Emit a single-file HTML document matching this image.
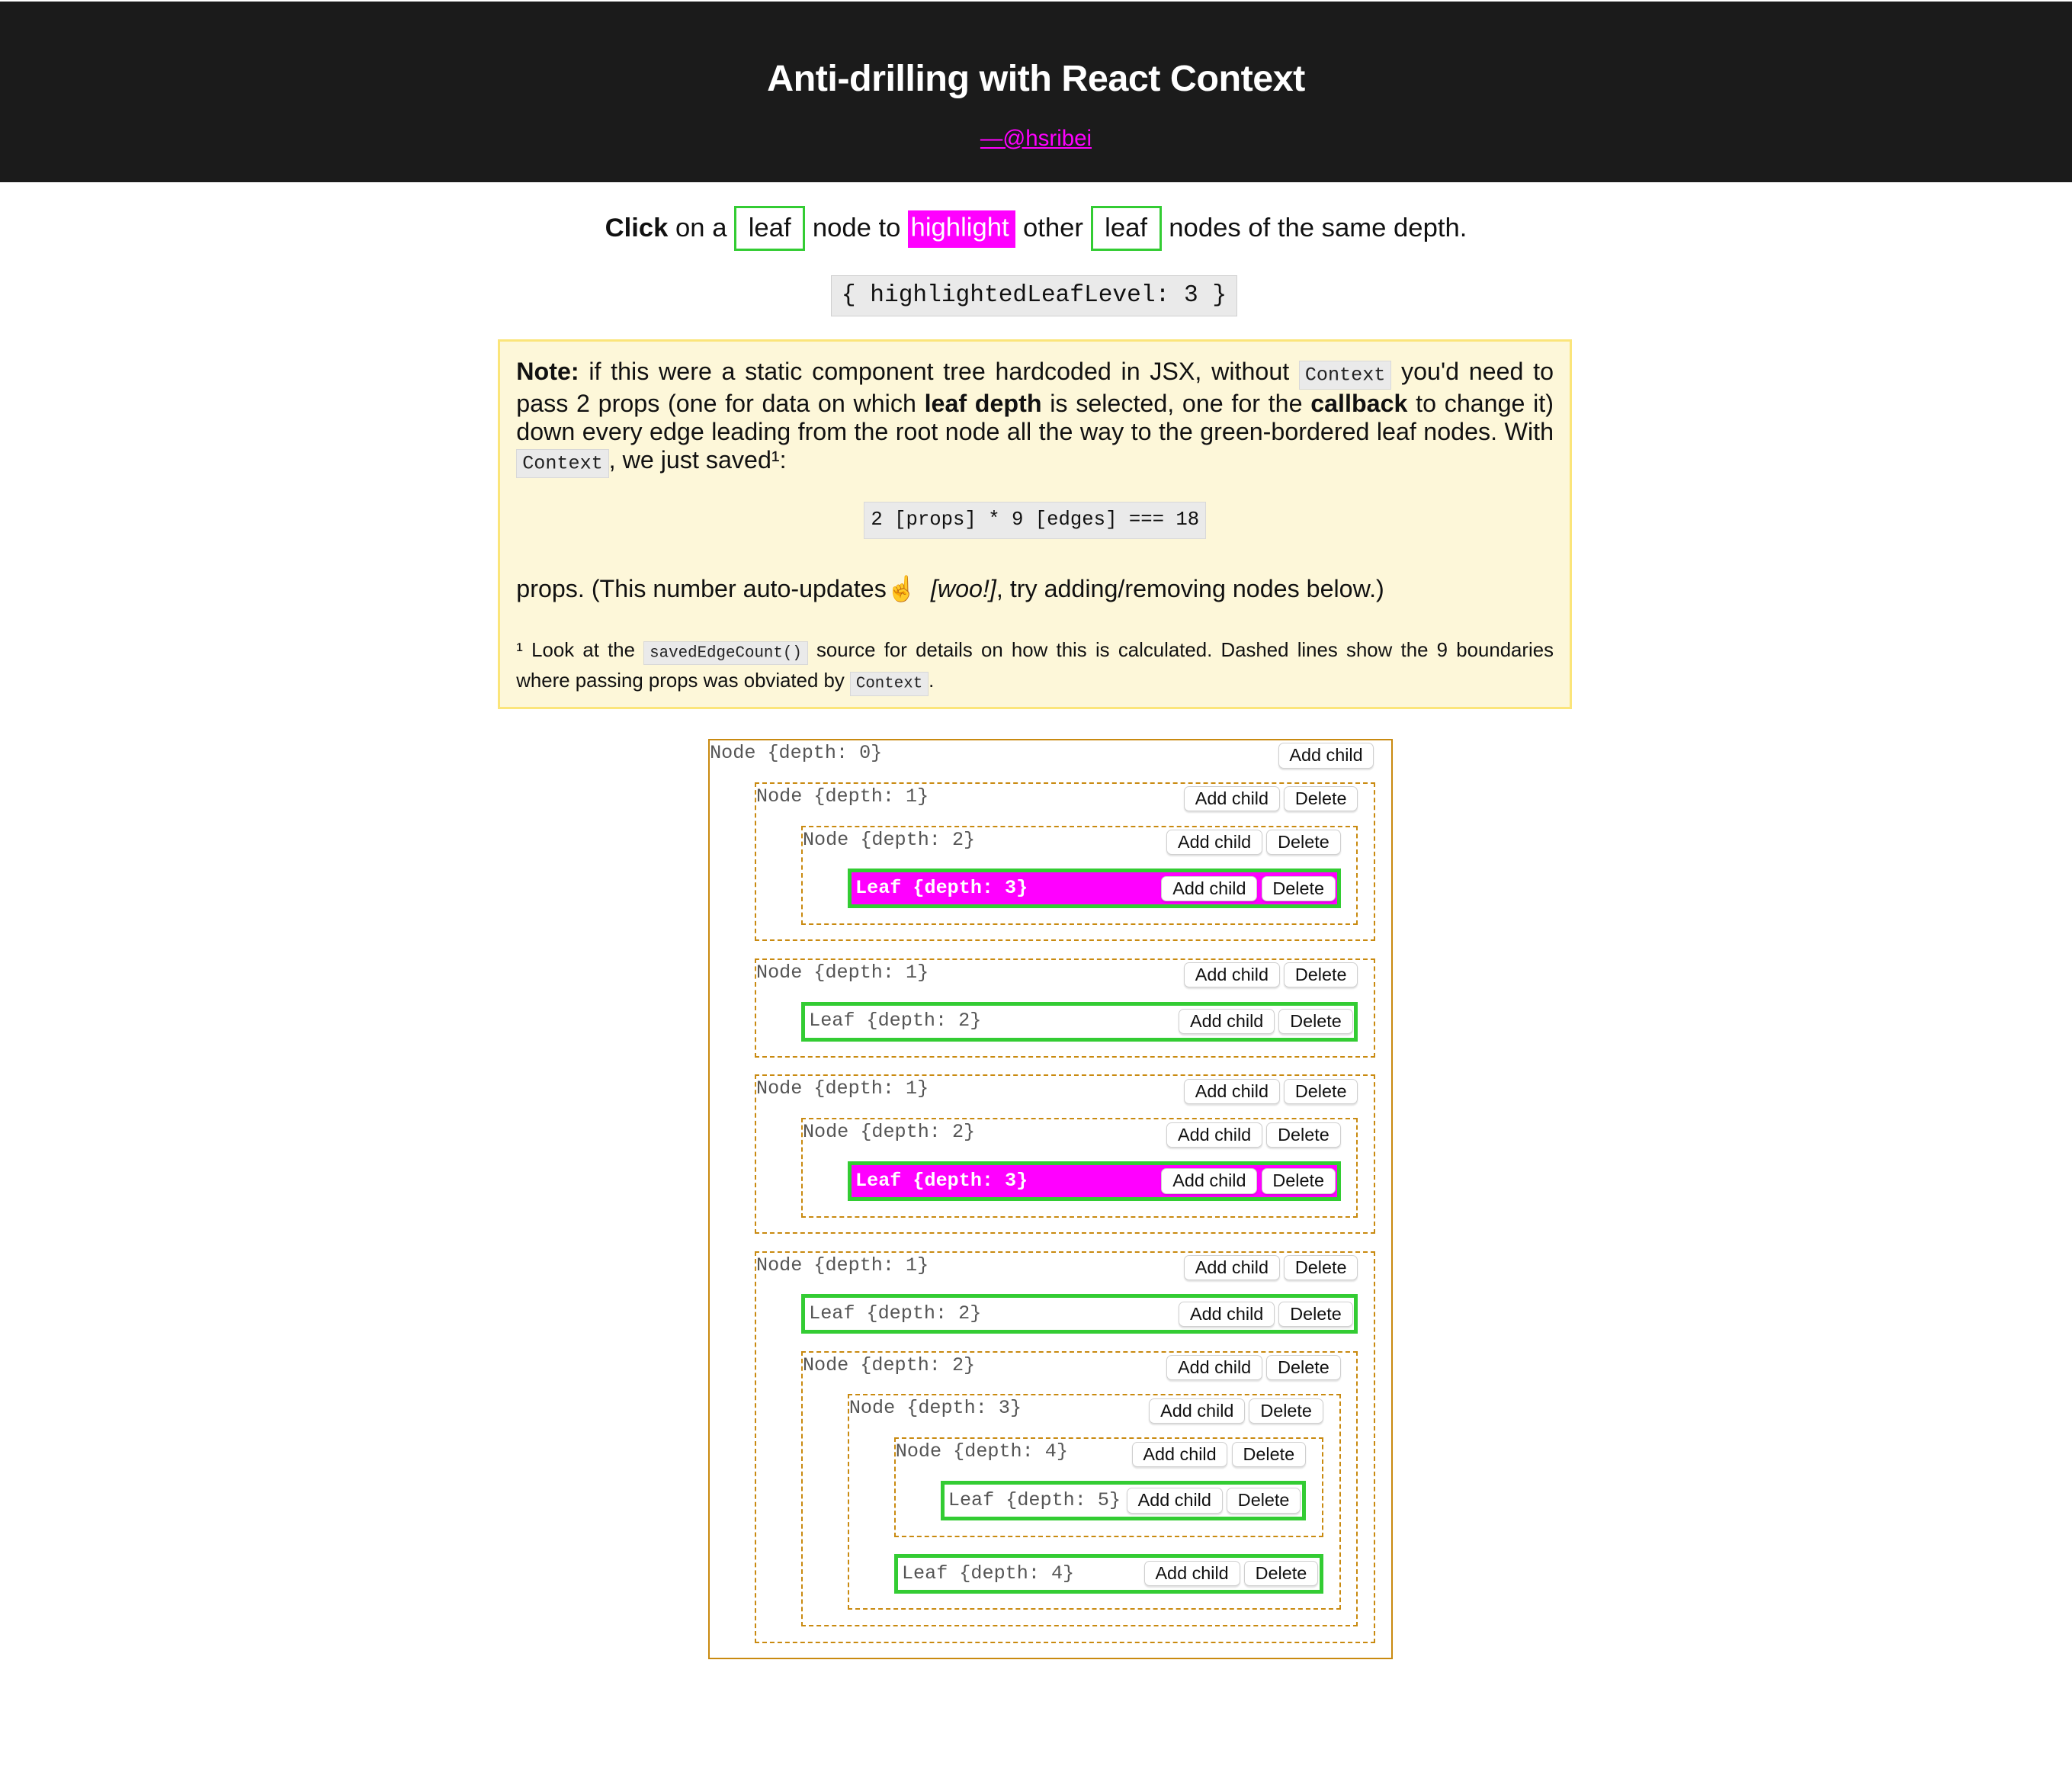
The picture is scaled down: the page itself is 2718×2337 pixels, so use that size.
<!DOCTYPE html>
<html><head><meta charset="utf-8"><style>
html,body{margin:0;padding:0;background:#fff;}
body{width:1568px;height:1348px;zoom:1.7334;position:relative;overflow:hidden;font-family:"Liberation Sans",Arial,sans-serif;color:#111;}
.hdr{position:absolute;left:0;top:1px;width:1568px;height:137px;background:#1b1b1b;text-align:center;}
.hdr h1{margin:0;position:absolute;top:42px;width:100%;font-size:28px;font-weight:bold;color:#fff;letter-spacing:-0.3px;}
.hdr a{position:absolute;top:94px;left:0;width:100%;font-size:17px;color:#ff00ff;text-decoration:underline;}
.intro{position:absolute;top:155px;left:0;width:1568px;text-align:center;font-size:20px;line-height:35px;}
.lf{display:inline-block;border:2px solid #33cc33;padding:0 9px;line-height:31px;}
.hl{background:#ff00ff;color:#fff;padding:2px 5px 4px 2px;}
.state{position:absolute;top:208px;left:629px;width:306px;height:30px;background:#eaeaea;border:1px solid #d0d0d0;font-family:"Liberation Mono",monospace;font-size:18px;line-height:30px;text-align:center;color:#111;white-space:nowrap;}
.note{position:absolute;top:257px;left:377px;width:785px;height:252px;background:#fdf7d9;border:2px solid #fbe57a;padding:12px 12px;font-size:18.6px;line-height:21.5px;}
.note p{margin:0;text-align:justify;}
code{font-family:"Liberation Mono",monospace;background:#eaeaea;border:1px solid #d8d8d8;font-size:14.5px;padding:2px 4px;color:#222;}
.calc{position:absolute;top:121px;left:275px;width:258px;height:27px;background:#eaeaea;border:1px solid #d8d8d8;font-family:"Liberation Mono",monospace;font-size:14.8px;line-height:27px;text-align:center;white-space:nowrap;}
.props{position:absolute;top:176px;left:12px;}
.foot{position:absolute;top:223px;left:12px;width:785px;font-size:14.9px;line-height:21px;text-align:justify;}
.foot code{font-size:12px;}
.tree{position:absolute;left:536px;top:559px;width:518px;}
.node{border:1.2px dashed #c98a10;padding:0 12px 11.3px 0;box-sizing:border-box;}
.root{border-style:solid;}
.h{display:flex;justify-content:space-between;align-items:flex-start;height:31.6px;}
.lab{font-family:"Liberation Mono",monospace;font-size:14.5px;color:#555;line-height:20px;white-space:nowrap;}
.bt{display:flex;gap:3px;margin-top:2px;flex-shrink:0;}
.b{background:#fff;border:1px solid #cfcfcf;border-radius:4px;box-shadow:0 1px 1px rgba(0,0,0,.12);font-size:13.5px;height:18px;line-height:18px;padding:0 8px;color:#111;white-space:nowrap;font-family:"Liberation Sans",Arial,sans-serif;}
.kids{margin-left:34px;display:flex;flex-direction:column;gap:12.9px;}
.leaf{border:3px solid #33cc33;height:30px;box-sizing:border-box;display:flex;justify-content:space-between;align-items:center;padding:0 1px 0 3px;}
.leaf .bt{margin-top:0;}
.leaf.on{background:#ff00ff;}
.leaf.on .lab{color:#fff;font-weight:bold;}
.root > .h .bt{margin-right:1px;}
</style></head><body>
<div class="hdr"><h1>Anti-drilling with React Context</h1><a>—@hsribei</a></div>
<div class="intro"><b>Click</b> on a <span class="lf">leaf</span> node to <span class="hl">highlight</span> other <span class="lf">leaf</span> nodes of the same depth.</div>
<div class="state">{ highlightedLeafLevel: 3 }</div>
<div class="note">
<p><b>Note:</b> if this were a static component tree hardcoded in JSX, without <code>Context</code> you'd need to pass 2 props (one for data on which <b>leaf depth</b> is selected, one for the <b>callback</b> to change it) down every edge leading from the root node all the way to the green-bordered leaf nodes. With <code>Context</code>, we just saved¹:</p>
<div class="calc">2 [props] * 9 [edges] === 18</div>
<div class="props">props. (This number auto-updates☝️ &nbsp;<i>[woo!]</i>, try adding/removing nodes below.)</div>
<div class="foot">¹ Look at the <code>savedEdgeCount()</code> source for details on how this is calculated. Dashed lines show the 9 boundaries where passing props was obviated by <code>Context</code>.</div>
</div>
<div class="tree">
<div class="node root"><div class="h"><span class="lab">Node {depth: 0}</span><span class="bt"><span class="b">Add child</span></span></div>
<div class="kids">
 <div class="node"><div class="h"><span class="lab">Node {depth: 1}</span><span class="bt"><span class="b">Add child</span><span class="b">Delete</span></span></div>
  <div class="kids">
   <div class="node"><div class="h"><span class="lab">Node {depth: 2}</span><span class="bt"><span class="b">Add child</span><span class="b">Delete</span></span></div>
    <div class="kids"><div class="leaf on"><span class="lab">Leaf {depth: 3}</span><span class="bt"><span class="b">Add child</span><span class="b">Delete</span></span></div></div>
   </div>
  </div>
 </div>
 <div class="node"><div class="h"><span class="lab">Node {depth: 1}</span><span class="bt"><span class="b">Add child</span><span class="b">Delete</span></span></div>
  <div class="kids"><div class="leaf"><span class="lab">Leaf {depth: 2}</span><span class="bt"><span class="b">Add child</span><span class="b">Delete</span></span></div></div>
 </div>
 <div class="node"><div class="h"><span class="lab">Node {depth: 1}</span><span class="bt"><span class="b">Add child</span><span class="b">Delete</span></span></div>
  <div class="kids">
   <div class="node"><div class="h"><span class="lab">Node {depth: 2}</span><span class="bt"><span class="b">Add child</span><span class="b">Delete</span></span></div>
    <div class="kids"><div class="leaf on"><span class="lab">Leaf {depth: 3}</span><span class="bt"><span class="b">Add child</span><span class="b">Delete</span></span></div></div>
   </div>
  </div>
 </div>
 <div class="node"><div class="h"><span class="lab">Node {depth: 1}</span><span class="bt"><span class="b">Add child</span><span class="b">Delete</span></span></div>
  <div class="kids">
   <div class="leaf"><span class="lab">Leaf {depth: 2}</span><span class="bt"><span class="b">Add child</span><span class="b">Delete</span></span></div>
   <div class="node"><div class="h"><span class="lab">Node {depth: 2}</span><span class="bt"><span class="b">Add child</span><span class="b">Delete</span></span></div>
    <div class="kids">
     <div class="node"><div class="h"><span class="lab">Node {depth: 3}</span><span class="bt"><span class="b">Add child</span><span class="b">Delete</span></span></div>
      <div class="kids">
       <div class="node"><div class="h"><span class="lab">Node {depth: 4}</span><span class="bt"><span class="b">Add child</span><span class="b">Delete</span></span></div>
        <div class="kids"><div class="leaf"><span class="lab">Leaf {depth: 5}</span><span class="bt"><span class="b">Add child</span><span class="b">Delete</span></span></div></div>
       </div>
       <div class="leaf"><span class="lab">Leaf {depth: 4}</span><span class="bt"><span class="b">Add child</span><span class="b">Delete</span></span></div>
      </div>
     </div>
    </div>
   </div>
  </div>
 </div>
</div>
</div>
</div>
</body></html>
